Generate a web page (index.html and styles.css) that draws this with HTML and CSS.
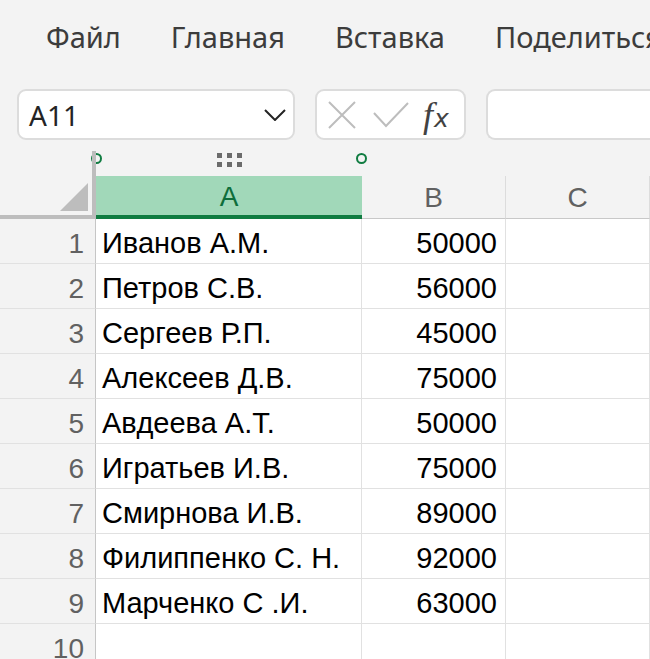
FILE: index.html
```html
<!DOCTYPE HTML>
<html>
<head>
    <title>Лист1</title>
    <meta charset="utf-8">
    <link rel="stylesheet" href="styles.css">
</head>
<body>
    <div class="menu">
        <span class="menuItem">Файл</span>
        <span class="menuItem">Главная</span>
        <span class="menuItem">Вставка</span>
        <span class="menuItem">Поделиться</span>
    </div>

    <div class="formulaBar">
        <div class="nameBox">
            <span class="nameBoxText">A11</span>
            <svg class="chevron" width="22" height="12" viewBox="0 0 22 12">
                <polyline points="1,1 11,11 21,1" fill="none" stroke="#242424" stroke-width="2"/>
            </svg>
        </div>
        <div class="fxButtons">
            <svg width="30" height="28" viewBox="0 0 30 28">
                <path d="M2 1 L28 27 M28 1 L2 27" stroke="#bdbdbd" stroke-width="2" fill="none"/>
            </svg>
            <svg width="36" height="26" viewBox="0 0 36 26">
                <polyline points="1,11 13,24 35,1" stroke="#bdbdbd" stroke-width="2" fill="none"/>
            </svg>
            <span class="fxLabel">f<span class="fxX">x</span></span>
        </div>
        <div class="formulaInput"></div>
    </div>

    <div class="sheet">
        <!-- corner + selection handles -->
        <div class="corner"><div class="cornerFrame"><div class="cornerTriangle"></div></div></div>
        <div class="handleStrip">
            <span class="handle handleLeft"></span>
            <div class="grip">
                <i></i><i></i><i></i><i></i><i></i><i></i>
            </div>
            <span class="handle handleRight"></span>
        </div>
        <div class="stripBlank"></div>
        <div class="stripBlank"></div>

        <!-- column headers -->
        <div class="colHead colSelected">A</div>
        <div class="colHead">B</div>
        <div class="colHead">C</div>

        <!-- rows -->
        <div class="rowHead">1</div><div class="cell">Иванов А.М.</div><div class="cell num">50000</div><div class="cell"></div>
        <div class="rowHead">2</div><div class="cell">Петров С.В.</div><div class="cell num">56000</div><div class="cell"></div>
        <div class="rowHead">3</div><div class="cell">Сергеев Р.П.</div><div class="cell num">45000</div><div class="cell"></div>
        <div class="rowHead">4</div><div class="cell">Алексеев Д.В.</div><div class="cell num">75000</div><div class="cell"></div>
        <div class="rowHead">5</div><div class="cell">Авдеева А.Т.</div><div class="cell num">50000</div><div class="cell"></div>
        <div class="rowHead">6</div><div class="cell">Игратьев И.В.</div><div class="cell num">75000</div><div class="cell"></div>
        <div class="rowHead">7</div><div class="cell">Смирнова И.В.</div><div class="cell num">89000</div><div class="cell"></div>
        <div class="rowHead">8</div><div class="cell">Филиппенко С. Н.</div><div class="cell num">92000</div><div class="cell"></div>
        <div class="rowHead">9</div><div class="cell">Марченко С .И.</div><div class="cell num">63000</div><div class="cell"></div>
        <div class="rowHead">10</div><div class="cell"></div><div class="cell num"></div><div class="cell"></div>
    </div>
</body>
</html>
```

FILE: styles.css
```css
* {
    box-sizing: border-box;
}

body {
    margin: 0;
    padding: 0;
    background: #f3f3f3;
    overflow: hidden;
    font-family: "Liberation Sans", Arial, sans-serif;
}

/* top menu */
.menu {
    display: flex;
    align-items: center;
    gap: 50px;
    height: 80px;
    padding: 0 0 8px 46px;
    white-space: nowrap;
    overflow: hidden;
}

.menuItem {
    font-family: "Noto Sans", "Open Sans", sans-serif;
    font-size: 29px;
    color: #3c3c3c;
}

/* name box / formula row */
.formulaBar {
    display: flex;
    gap: 20px;
    height: 60px;
    padding: 9px 0 0 17px;
}

.nameBox, .fxButtons, .formulaInput {
    height: 51px;
    background: #fff;
    border: 2px solid #dcdcdc;
    border-radius: 9px;
}

.nameBox {
    display: flex;
    align-items: center;
    justify-content: space-between;
    width: 278px;
    padding: 0 7px 0 10px;
}

.nameBoxText {
    font-family: "Noto Sans", sans-serif;
    font-size: 28px;
    color: #242424;
}

.fxButtons {
    display: flex;
    align-items: center;
    gap: 16px;
    width: 151px;
    padding: 0 0 0 10px;
}

.fxLabel {
    font-family: "Liberation Serif", serif;
    font-style: italic;
    font-size: 36px;
    color: #424242;
    line-height: 1;
    margin-left: -2px;
}

.fxX {
    font-family: "DejaVu Sans", sans-serif;
    font-size: 25px;
    margin-left: 1px;
}

.formulaInput {
    flex: 1;
    border-right: none;
    border-radius: 9px 0 0 9px;
}

/* grid */
.sheet {
    display: grid;
    grid-template-columns: 96px 266px 144px 1fr;
    grid-template-rows: 36px 43px repeat(10, 45px);
}

.corner {
    grid-row: 1 / span 2;
    position: relative;
    z-index: 2;
    padding-top: 11px;
}

.cornerFrame {
    display: flex;
    justify-content: flex-end;
    align-items: flex-end;
    height: 100%;
    padding: 0 4px 4px 0;
    border-right: 4px solid #bdbdbd;
    border-bottom: 4px solid #bdbdbd;
}

.cornerTriangle {
    width: 28px;
    height: 28px;
    background: #bdbdbd;
    clip-path: polygon(100% 0, 100% 100%, 0 100%);
}

.handleStrip {
    position: relative;
    display: flex;
    justify-content: center;
    padding-top: 13px;
}

.grip {
    display: grid;
    grid-template-columns: repeat(3, 5px);
    grid-auto-rows: 5px;
    column-gap: 5px;
    row-gap: 4px;
    height: 14px;
}

.grip i {
    background: #6b6b6b;
}

.handle {
    position: absolute;
    top: 13px;
    width: 11px;
    height: 11px;
    border: 2px solid #107c41;
    border-radius: 50%;
    background: #f3f3f3;
}

.handleLeft {
    left: -5px;
}

.handleRight {
    right: -5px;
}

.colHead {
    display: flex;
    align-items: center;
    justify-content: center;
    padding-top: 2px;
    font-size: 28px;
    color: #616161;
    border-bottom: 1px solid #c8c8c8;
    border-right: 1px solid #dcdcdc;
}

.colSelected {
    background: #a1d8b9;
    color: #0e6e3b;
    border-right: none;
    border-bottom: 4px solid #107c41;
}

.rowHead {
    padding: 5px 11px 0 0;
    text-align: right;
    font-size: 28px;
    line-height: 39px;
    color: #616161;
    border-right: 1px solid #c6c6c6;
    border-bottom: 1px solid #e1e1e1;
}

.cell {
    padding: 5px 8px 0 6px;
    font-size: 29px;
    line-height: 39px;
    color: #000;
    white-space: nowrap;
    overflow: hidden;
    background: #fff;
    border-right: 1px solid #e1e1e1;
    border-bottom: 1px solid #e1e1e1;
}

.num {
    text-align: right;
}
```
